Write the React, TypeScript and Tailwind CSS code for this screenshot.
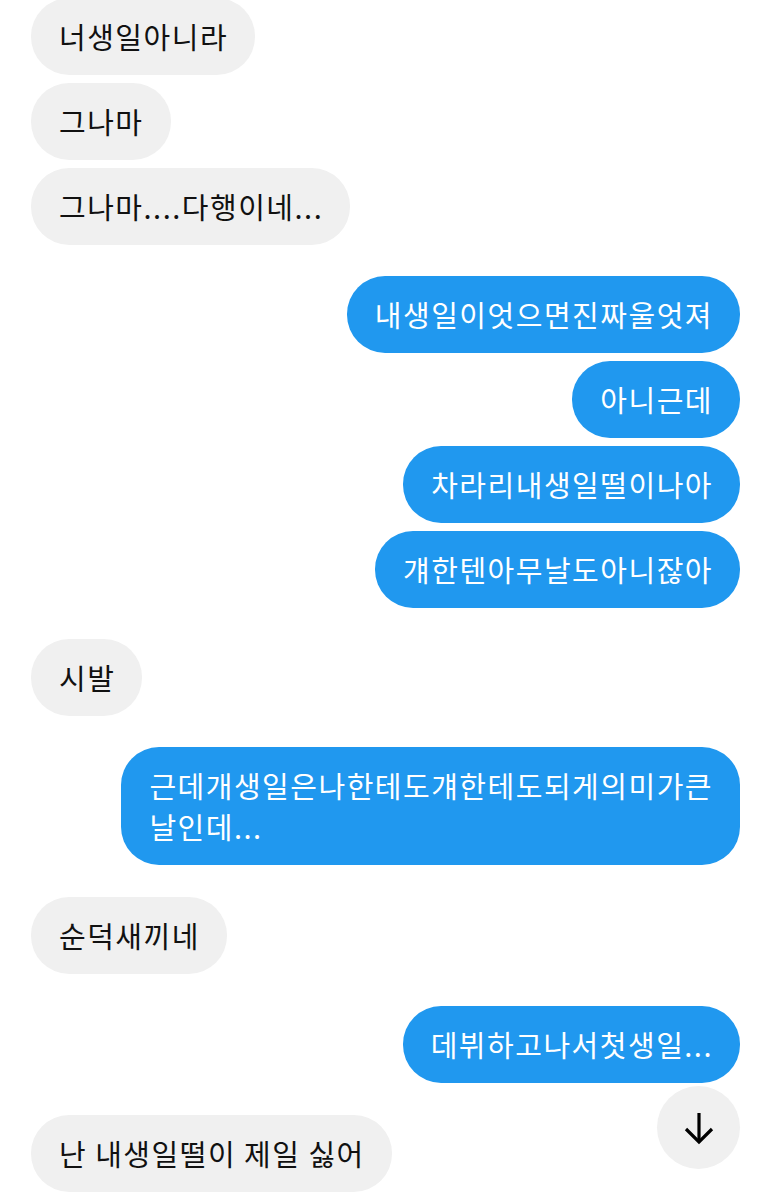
import React from "react";

type Msg = { side: "L" | "R"; text: React.ReactNode; gap: "s" | "l" | "x" | "first" };

const msgs: Msg[] = [
  { side: "L", text: "너생일아니라", gap: "first" },
  { side: "L", text: "그나마", gap: "s" },
  { side: "L", text: "그나마....다행이네...", gap: "s" },
  { side: "R", text: "내생일이엇으면진짜울엇져", gap: "l" },
  { side: "R", text: "아니근데", gap: "s" },
  { side: "R", text: "차라리내생일떨이나아", gap: "s" },
  { side: "R", text: "걔한텐아무날도아니잖아", gap: "s" },
  { side: "L", text: "시발", gap: "l" },
  {
    side: "R",
    text: (
      <>
        근데개생일은나한테도걔한테도되게의미가큰
        <br />
        날인데...
      </>
    ),
    gap: "l",
  },
  { side: "L", text: "순덕새끼네", gap: "x" },
  { side: "R", text: "데뷔하고나서첫생일...", gap: "x" },
  { side: "L", text: "난 내생일떨이 제일 싫어", gap: "x" },
];

function gapClass(g: Msg["gap"]) {
  if (g === "first") return "";
  if (g === "s") return "mt-[8px]";
  if (g === "l") return "mt-[31px]";
  return "mt-[32px]";
}

export default function App() {
  return (
    <div
      className="relative w-[771px] h-[1200px] overflow-hidden bg-white"
      style={{ fontFamily: '"Noto Sans CJK KR", "Noto Sans", sans-serif' }}
    >
      <div className="flex flex-col px-[31px] -mt-[2px]">
        {msgs.map((m, i) => (
          <div
            key={i}
            className={"flex " + (m.side === "L" ? "justify-start " : "justify-end ") + gapClass(m.gap)}
          >
            {m.side === "L" ? (
              <div className="rounded-[38px] bg-[#f0f0f0] pl-[28px] pr-[27px] py-[18px] text-[29px] leading-[41px] tracking-[1.5px] text-[#111111] whitespace-nowrap">
                {m.text}
              </div>
            ) : (
              <div className="rounded-[38px] bg-[#2098ef] pl-[28px] pr-[27px] py-[18px] text-[29px] leading-[41px] tracking-[1.5px] text-white whitespace-nowrap">
                {m.text}
              </div>
            )}
          </div>
        ))}
      </div>
      <div className="absolute left-[657px] top-[1086px] flex h-[83px] w-[83px] items-center justify-center rounded-full bg-[#f0f0f0]">
        <svg width="32" height="34" viewBox="0 0 32 34" fill="none">
          <path d="M16 2 V31" stroke="#000" strokeWidth="3.2" />
          <path d="M3 18 L16 31 L29 18" stroke="#000" strokeWidth="3.2" strokeLinejoin="miter" />
        </svg>
      </div>
    </div>
  );
}
